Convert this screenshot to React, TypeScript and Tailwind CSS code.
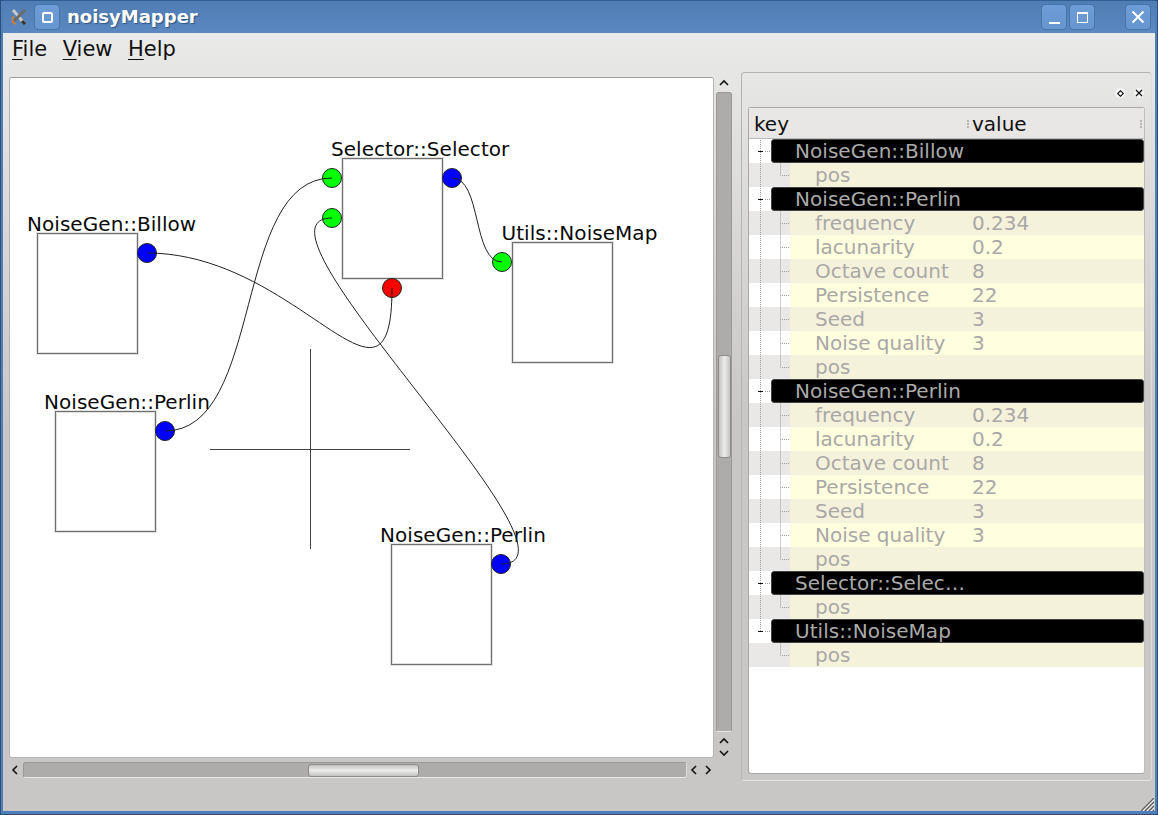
const sans = "font-['DejaVu_Sans',sans-serif]";

type Row =
  | { t: 'h'; k: string }
  | { t: 'c'; k: string; v?: string };

const params: Row[] = [
  { t: 'c', k: 'frequency', v: '0.234' },
  { t: 'c', k: 'lacunarity', v: '0.2' },
  { t: 'c', k: 'Octave count', v: '8' },
  { t: 'c', k: 'Persistence', v: '22' },
  { t: 'c', k: 'Seed', v: '3' },
  { t: 'c', k: 'Noise quality', v: '3' },
  { t: 'c', k: 'pos' },
];

const rows: Row[] = [
  { t: 'h', k: 'NoiseGen::Billow' },
  { t: 'c', k: 'pos' },
  { t: 'h', k: 'NoiseGen::Perlin' },
  ...params,
  { t: 'h', k: 'NoiseGen::Perlin' },
  ...params,
  { t: 'h', k: 'Selector::Selec…' },
  { t: 'c', k: 'pos' },
  { t: 'h', k: 'Utils::NoiseMap' },
  { t: 'c', k: 'pos' },
];

const nodes = [
  { label: 'NoiseGen::Billow', x: 27, y: 233, bx: 37 },
  { label: 'NoiseGen::Perlin', x: 44, y: 411, bx: 55 },
  { label: 'Selector::Selector', x: 331, y: 158, bx: 342 },
  { label: 'Utils::NoiseMap', x: 501.5, y: 242, bx: 512 },
  { label: 'NoiseGen::Perlin', x: 380, y: 544, bx: 391 },
];

const ports = [
  { x: 147, y: 253, c: '#0000ff' },
  { x: 165, y: 431, c: '#0000ff' },
  { x: 332, y: 178, c: '#00ff00' },
  { x: 332, y: 218, c: '#00ff00' },
  { x: 452, y: 178, c: '#0000ff' },
  { x: 392, y: 288, c: '#ff0000' },
  { x: 502, y: 262, c: '#00ff00' },
  { x: 501, y: 564, c: '#0000ff' },
];

function Canvas() {
  return (
    <div className="relative w-[703px] h-[679px] bg-white overflow-hidden rounded-[2px]">
      {nodes.map((n, i) => (
        <div key={i}>
          <div
            className={`absolute text-[20px] leading-[24px] tracking-[0.05px] text-[#0a0a0a] whitespace-nowrap ${sans}`}
            style={{ left: n.x - 10, top: n.y - 78 - 21 }}
          >
            {n.label}
          </div>
          <div
            className="absolute w-[101px] h-[121px] border border-[#707070] bg-white shadow-[0_0_0_1px_#e0e0e0,inset_0_0_0_1px_#e0e0e0]"
            style={{ left: n.bx - 10, top: n.y - 78 }}
          />
        </div>
      ))}
      <svg className="absolute left-0 top-0" width="703" height="679" viewBox="10 78 703 679" fill="none">
        <path d="M210 449.5H410M310.5 349V549" stroke="#444" strokeWidth="1" />
        {ports.map((p, i) => (
          <circle key={i} cx={p.x} cy={p.y} r="9.5" fill={p.c} stroke="#222" strokeWidth="1" />
        ))}
        <g stroke="#222" strokeWidth="1">
          <path d="M147 253C300 253 392 440 392 288" />
          <path d="M165 431C265 431 232 178 332 178" />
          <path d="M332 218C232 218 601 564 501 564" />
          <path d="M452 178C482 178 472 262 502 262" />
        </g>
      </svg>
    </div>
  );
}

function Chevron({ d, className = '' }: { d: string; className?: string }) {
  return (
    <svg width="12" height="12" viewBox="0 0 12 12" className={`shrink-0 ${className}`} fill="none">
      <path d={d} stroke="#111" strokeWidth="1.6" />
    </svg>
  );
}
const UP = 'M2 8L6 4L10 8';
const DOWN = 'M2 4L6 8L10 4';
const LEFT = 'M8 2L4 6L8 10';
const RIGHT = 'M4 2L8 6L4 10';

function VScroll() {
  return (
    <div className="w-[20px] h-[679px] flex flex-col items-center shrink-0 ml-[1px]">
      <Chevron d={UP} className="mt-[-1px] mb-[3px]" />
      <div className="w-[16px] h-[640px] shrink-0 bg-[#adacaa] rounded-[3px] border border-[#9a9997] border-b-[#e8e8e8] pt-[262px] flex justify-center">
        <div className="w-[13px] h-[103px] rounded-[3px] border border-[#8c8b89] bg-gradient-to-r from-[#c4c3c1] via-[#ececec] to-[#c4c3c1]" />
      </div>
      <Chevron d={UP} className="mt-[3px]" />
      <Chevron d={DOWN} />
    </div>
  );
}

function HScroll() {
  return (
    <div className="flex items-center h-[20px] mt-[3px]">
      <Chevron d={LEFT} className="ml-[-1px] mr-[2px]" />
      <div className="w-[664px] h-[16px] shrink-0 bg-[#adacaa] rounded-[3px] border border-[#9a9997] border-r-[#dcdcdc] border-b-[#e8e8e8] pl-[284px] flex items-center">
        <div className="w-[111px] h-[13px] rounded-[3px] border border-[#8c8b89] bg-gradient-to-b from-[#c4c3c1] via-[#ececec] to-[#c4c3c1]" />
      </div>
      <Chevron d={LEFT} className="ml-[1px]" />
      <Chevron d={RIGHT} className="ml-[2px]" />
    </div>
  );
}

function TreeLines() {
  const minor: number[] = [];
  rows.forEach((r, i) => {
    if (r.t === 'c') minor.push(i);
  });
  let seg = '';
  minor.forEach((i) => {
    const y = i * 24 + 12.5;
    seg += `M789 ${y}H780.5 `;
    const prev = rows[i - 1];
    const startY = prev.t === 'h' ? y - 24 + 12 : y - 24;
    seg += `M780.5 ${startY}V${y} `;
  });
  let main = 'M760.5 1V492';
  rows.forEach((r, i) => {
    if (r.t === 'h') main += ` M765 ${i * 24 + 12.5}H771`;
  });
  return (
    <svg className="absolute left-0 top-0" width="60" height="540" viewBox="749 0 60 540" fill="none">
      <path d={main} stroke="#9c9c9c" strokeDasharray="1 1" />
      <path d={seg} stroke="#9c9c9c" strokeDasharray="1 1" />
      {rows.map((r, i) =>
        r.t === 'h' ? <path key={i} d={`M758 ${i * 24 + 12.5}H763`} stroke="#111" /> : null
      )}
    </svg>
  );
}

function Tree() {
  return (
    <div className={`flex flex-col w-[397px] h-[667px] rounded-[3px] border border-[#a9a8a6] border-r-[#bdbcba] bg-white text-[20px] ${sans}`}>
      <div className="relative flex h-[31px] shrink-0 bg-[#e8e7e6] items-center text-[#111] leading-[24px] pt-[2px] border-b border-[#bbbaba]">
        <div className="w-[223px] pl-[5px]">key</div>
        <div className="flex-1">value</div>
        <div className="absolute left-[218px] top-[12px] h-[8px] border-l-2 border-dotted border-[#b5b4b2]" />
        <div className="absolute right-[2px] top-[12px] h-[8px] border-l-2 border-dotted border-[#b5b4b2]" />
      </div>
      <div className="relative">
        {rows.map((r, i) => {
          const alt = i % 2 === 1;
          if (r.t === 'h') {
            return (
              <div key={i} className="flex h-[24px] bg-white pl-[22px]">
                <div className="w-[373px] h-[24px] bg-black rounded-[3px] border border-[#444] pl-[23px] text-[#aaaaaa] leading-[23px] tracking-[0.05px] whitespace-nowrap">
                  {r.k}
                </div>
              </div>
            );
          }
          return (
            <div key={i} className={`flex h-[24px] ${alt ? 'bg-[#e9e8e6]' : 'bg-white'}`}>
              <div
                className={`ml-[41px] flex-1 flex rounded-l-[3px] text-[#a9a8a6] leading-[24px] ${alt ? 'bg-[#f5f2dc]' : 'bg-[#ffffdf]'}`}
              >
                <div className="w-[182px] pl-[25px] whitespace-nowrap">{r.k}</div>
                <div className="flex-1">{r.v}</div>
              </div>
            </div>
          );
        })}
        <TreeLines />
      </div>
    </div>
  );
}

function TitleBtn({ children }: { children: React.ReactNode }) {
  return (
    <div className="w-[26px] h-[26px] rounded-[4px] bg-gradient-to-b from-[#6d9cd6] to-[#6795d0] border border-[#4674a9] flex items-center justify-center">
      {children}
    </div>
  );
}

export default function App() {
  return (
    <div className={`relative w-[1158px] h-[815px] flex flex-col bg-[#c8c7c5] border-x-[3px] border-[#4f7fbb] overflow-hidden outline outline-1 -outline-offset-1 outline-[#2f4f7a] ${sans}`}>
      <div className="relative h-[33px] shrink-0 -mx-[3px] flex items-center pl-[9px] pr-[7px] bg-gradient-to-b from-[#4f7db4] to-[#5b88c0] border-t border-[#2f5f96]">
        <svg width="20" height="20" viewBox="0 0 20 20" className="mr-[5px] mt-[-1px]">
          <path d="M4 3L15 16" stroke="#c8c8c8" strokeWidth="3" />
          <path d="M16 3L5 14" stroke="#6a6a6a" strokeWidth="3" />
          <path d="M5 9C2 12 3 16 7 17" stroke="#d9822b" strokeWidth="1.6" fill="none" />
          <path d="M13 14L16 17" stroke="#3a3226" strokeWidth="3" />
        </svg>
        <TitleBtn>
          <div className="w-[11px] h-[11px] border-2 border-white rounded-[2px]" />
        </TitleBtn>
        <div className="ml-[7px] text-white font-bold text-[18px] leading-none [text-shadow:1px_1px_1px_#2f5280]">noisyMapper</div>
        <div className="flex-1" />
        <TitleBtn>
          <div className="w-[11px] h-[2px] bg-white mt-[12px]" />
        </TitleBtn>
        <div className="w-[2px]" />
        <TitleBtn>
          <div className="w-[11px] h-[11px] border border-white border-t-2" />
        </TitleBtn>
        <div className="w-[30px]" />
        <TitleBtn>
          <svg width="14" height="14" viewBox="0 0 14 14"><path d="M1.5 1.5L12.5 12.5M12.5 1.5L1.5 12.5" stroke="#fff" strokeWidth="2" /></svg>
        </TitleBtn>
      </div>

      <div className="flex flex-1 flex-col bg-gradient-to-b from-[#eaeae9] to-[#c8c7c5] to-[50%]">
        <div className="h-[32px] flex items-center pl-[9px] gap-[16px] text-[21px] leading-none text-[#111] shrink-0">
          <span><span className="underline underline-offset-[3px] decoration-1">F</span>ile</span>
          <span className="-ml-[0.5px]"><span className="underline underline-offset-[3px] decoration-1">V</span>iew</span>
          <span className="-ml-[0.5px]"><span className="underline underline-offset-[3px] decoration-1">H</span>elp</span>
        </div>
        <div className="flex pl-[7px] pt-[13px] items-start">
          <div className="flex flex-col">
            <div className="flex">
              <div className="border border-[#b5b4b2] border-t-[#9f9e9c] rounded-[3px] -m-[1px]"><Canvas /></div>
              <VScroll />
            </div>
            <HScroll />
          </div>
          <div className="ml-[7px] mt-[-6px] w-[411px] h-[709px] rounded-[4px] border border-[#b5b4b2] border-r-[#dedddc] border-b-[#e6e5e4] flex flex-col pl-[6px] pt-[6px]">
            <div className="h-[28px] flex items-center justify-end pr-[7px] gap-[9px] shrink-0">
              <div className="w-[10px] h-[10px] rounded-full bg-[#f4f4f4] flex items-center justify-center">
                <div className="w-[5px] h-[5px] border border-black rotate-45" />
              </div>
              <div className="w-[10px] h-[10px] rounded-full bg-[#f4f4f4] flex items-center justify-center">
                <svg width="8" height="8" viewBox="0 0 8 8"><path d="M1 1L7 7M7 1L1 7" stroke="#111" strokeWidth="1.2" /></svg>
              </div>
            </div>
            <Tree />
          </div>
        </div>
        <div className="flex-1" />
      </div>

      <div className="h-[4px] shrink-0 -mx-[3px] bg-[#4f7fbb] border-b border-[#1f3b5e]" />
      <svg className="absolute left-[1138px] top-[798px]" width="13" height="13" viewBox="0 0 13 13">
        <path d="M0 13L13 0M4 13L13 4M8 13L13 8M12 13L13 12" stroke="#5a5a5a" strokeWidth="1.2" />
        <path d="M2 13L13 2M6 13L13 6M10 13L13 10" stroke="#f2f2f2" strokeWidth="1" />
      </svg>
    </div>
  );
}
